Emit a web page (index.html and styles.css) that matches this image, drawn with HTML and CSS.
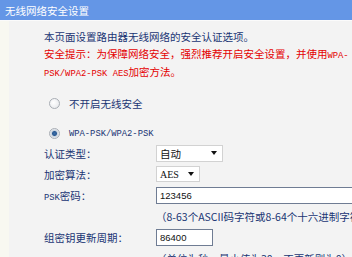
FILE: index.html
```html
<!DOCTYPE html>
<html lang="zh-CN">
<head>
    <meta charset="UTF-8">
    <meta name="viewport" content="width=device-width, initial-scale=1.0">
    <title>无线网络安全设置</title>
    <link rel="stylesheet" href="styles.css">
</head>
<body>

    <div class="title">无线网络安全设置</div>

    <div class="content">
        <!-- Intro -->
        <div class="intro">
            <p>本页面设置路由器无线网络的安全认证选项。</p>
            <p class="warn">安全提示：为保障网络安全，强烈推荐开启安全设置，并使用<span class="mono">WPA-</span></p>
            <p class="warn"><span class="mono">PSK/WPA2-PSK AES</span>加密方法。</p>
        </div>

        <!-- Security mode -->
        <div class="radio-row first">
            <span class="radio"></span>
            <span>不开启无线安全</span>
        </div>
        <div class="radio-row">
            <span class="radio checked"></span>
            <span class="mono">WPA-PSK/WPA2-PSK</span>
        </div>

        <div class="form">
            <div class="label">认证类型：</div>
            <div class="field">
                <div class="select wide">
                    <span>自动</span>
                    <span class="arrow"></span>
                </div>
            </div>

            <div class="label">加密算法：</div>
            <div class="field">
                <div class="select narrow">
                    <span class="serif">AES</span>
                    <span class="arrow"></span>
                </div>
            </div>

            <div class="label"><span class="mono">PSK</span>密码：</div>
            <div class="field">
                <input class="text long" type="text" value="123456">
            </div>

            <div class="label"></div>
            <div class="field hint">（8-63个ASCII码字符或8-64个十六进制字符）</div>

            <div class="label">组密钥更新周期：</div>
            <div class="field">
                <input class="text short" type="text" value="86400">
            </div>

            <div class="label"></div>
            <div class="field hint">（单位为秒，最小值为30，不更新则为0）</div>
        </div>
    </div>

</body>
</html>
```

FILE: styles.css
```css
* {
    margin: 0;
    padding: 0;
    box-sizing: border-box;
}

body {
    width: 352px;
    height: 257px;
    overflow: hidden;
    background: #f3f3f3;
    font-family: "Noto Sans CJK SC", "Liberation Sans", sans-serif;
    font-size: 10.5px;
    color: #1a3573;
}

.title {
    height: 21px;
    line-height: 21px;
    padding-left: 5px;
    background: #6496e6;
    color: #fff;
    border-bottom: 1px solid #fbfbfb;
}

.content {
    border-left: 9px solid #f8f8f1;
    padding-left: 35px;
    height: 236px;
    white-space: nowrap;
}

.mono {
    font-family: "Liberation Mono", monospace;
    font-size: 8.8px;
}

.serif {
    font-family: "Liberation Serif", serif;
    font-size: 10px;
}

/* Intro */
.intro {
    padding-top: 8px;
    line-height: 16.5px;
}

.warn {
    color: #e40000;
}

/* Radios */
.radio-row {
    display: flex;
    align-items: center;
    height: 18px;
    margin-top: 12px;
}

.radio-row.first {
    margin-top: 12px;
}

.radio {
    width: 11px;
    height: 11px;
    margin-left: 5px;
    margin-right: 9px;
    border-radius: 50%;
    border: 1px solid #a9aeb5;
    background: radial-gradient(circle at 40% 40%, #ffffff, #e3e5e8);
}

.radio.checked {
    background: radial-gradient(circle, #3c6fa8 0, #2a5a94 2px, #c9d3de 3px, #f2f3f5 5px);
}

/* Form */
.form {
    display: grid;
    grid-template-columns: 112px 1fr;
    grid-auto-rows: 21px;
    align-items: center;
}

.field {
    display: flex;
    align-items: center;
}

.select {
    display: flex;
    align-items: center;
    justify-content: space-between;
    background: #fff;
    border: 1px solid #d2d2d2;
    padding: 0 5px 0 3px;
    color: #111;
}

.select.wide {
    width: 67px;
    height: 17px;
}

.select.narrow {
    width: 44px;
    height: 16px;
}

.arrow {
    width: 0;
    height: 0;
    border-left: 3px solid transparent;
    border-right: 3px solid transparent;
    border-top: 4px solid #111;
}

.text {
    height: 17px;
    border: 1px solid #6f7c93;
    background: #fff;
    padding: 0 3px;
    font-family: "Liberation Sans", sans-serif;
    font-size: 9.5px;
    color: #111;
    outline: none;
}

.text.long {
    width: 230px;
}

.text.short {
    width: 57px;
}

.hint {
    color: #1a3573;
}
```
